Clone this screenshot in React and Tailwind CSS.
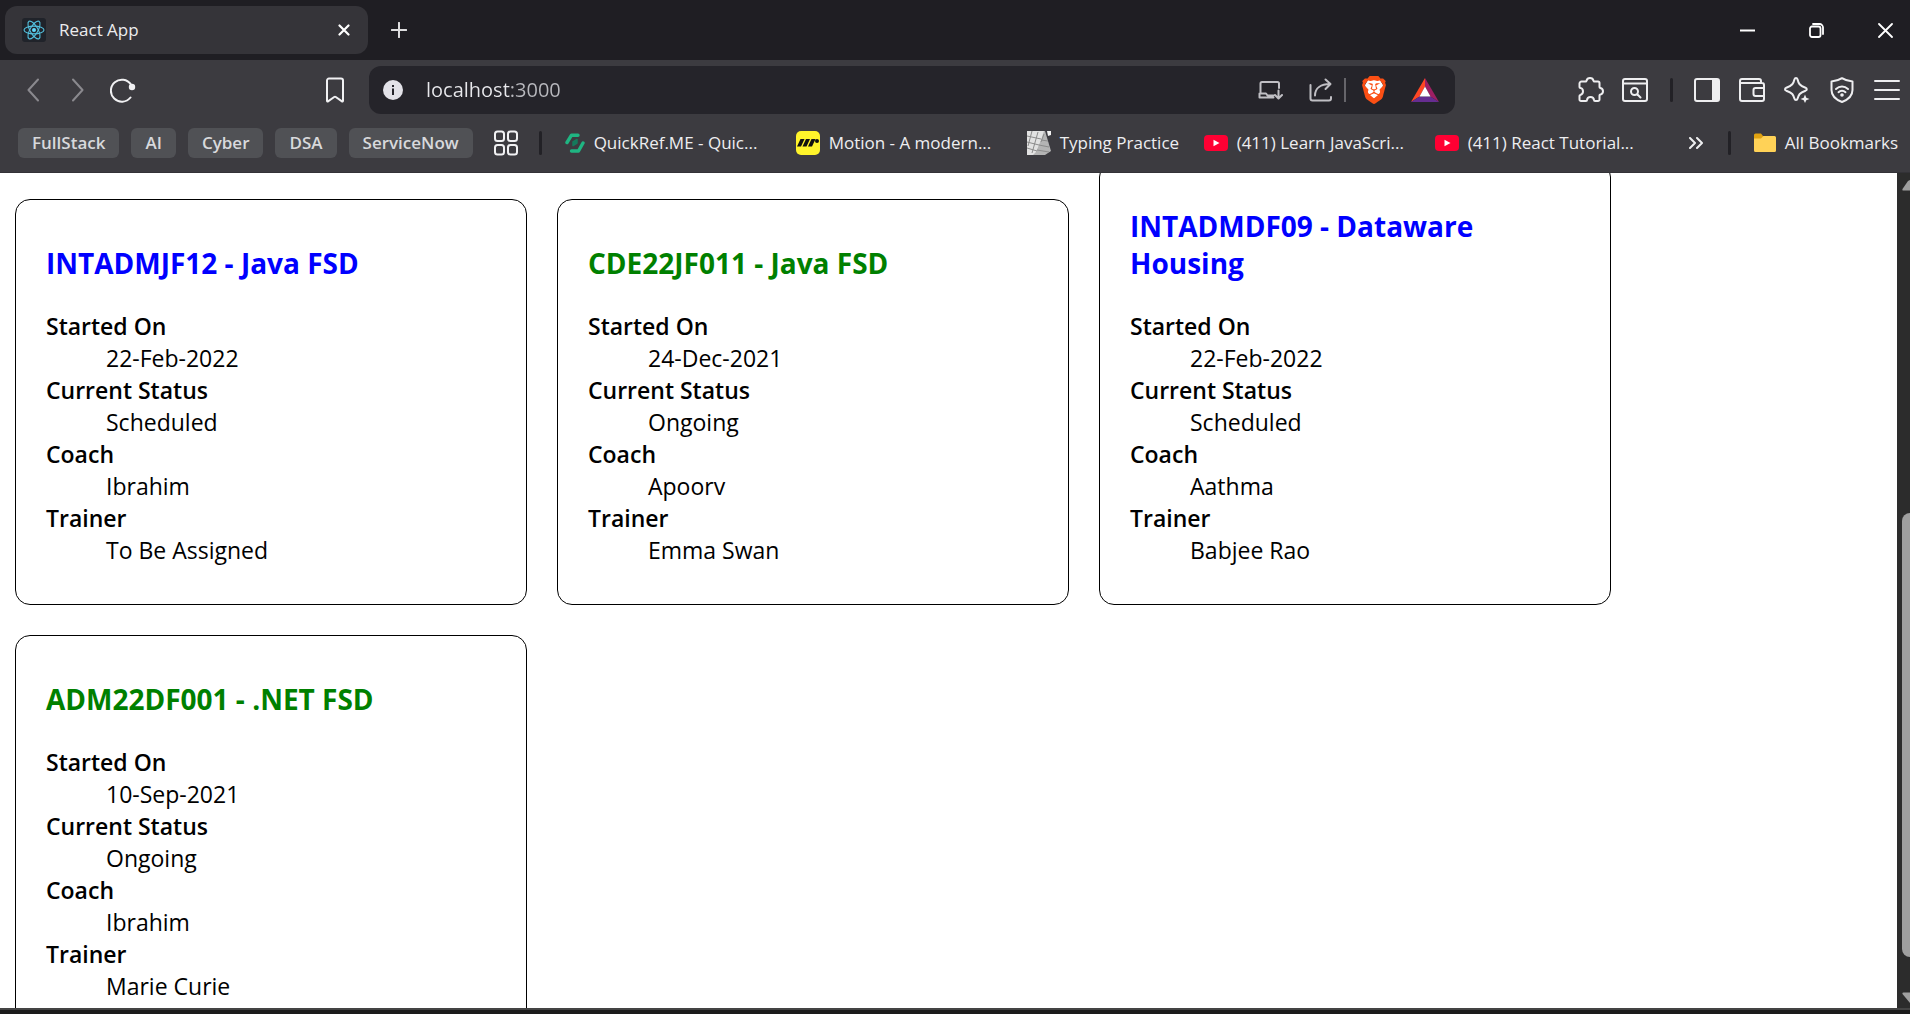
import React from "react";
import { SiBrave } from "react-icons/si";

const TAGS = ["FullStack", "AI", "Cyber", "DSA", "ServiceNow"];

const COHORTS = [
  { code: "INTADMJF12 - Java FSD", started: "22-Feb-2022", status: "Scheduled", coach: "Ibrahim", trainer: "To Be Assigned" },
  { code: "CDE22JF011 - Java FSD", started: "24-Dec-2021", status: "Ongoing", coach: "Apoorv", trainer: "Emma Swan" },
  { code: "INTADMDF09 - Dataware Housing", started: "22-Feb-2022", status: "Scheduled", coach: "Aathma", trainer: "Babjee Rao" },
  { code: "ADM22DF001 - .NET FSD", started: "10-Sep-2021", status: "Ongoing", coach: "Ibrahim", trainer: "Marie Curie" },
];

function Icon({ w = 26, h = 26, children, sw = 2, className = "" }) {
  return (
    <svg
      width={w}
      height={h}
      viewBox={`0 0 ${w} ${h}`}
      fill="none"
      stroke="currentColor"
      strokeWidth={sw}
      strokeLinecap="round"
      strokeLinejoin="round"
      className={`shrink-0 ${className}`}
      aria-hidden="true"
    >
      {children}
    </svg>
  );
}

function IconButton({ label, children, className = "" }) {
  return (
    <button type="button" aria-label={label} className={`flex shrink-0 items-center justify-center ${className}`}>
      {children}
    </button>
  );
}

function ReactLogo() {
  return (
    <svg width="24" height="24" viewBox="0 0 24 24" fill="none" stroke="#53c1de" strokeWidth="1.1" className="shrink-0" aria-hidden="true">
      <rect width="24" height="24" rx="3" fill="#20232a" stroke="none" />
      <circle cx="12" cy="12" r="2" fill="#61dafb" stroke="none" />
      <ellipse cx="12" cy="12" rx="10" ry="3.9" />
      <ellipse cx="12" cy="12" rx="10" ry="3.9" transform="rotate(60 12 12)" />
      <ellipse cx="12" cy="12" rx="10" ry="3.9" transform="rotate(120 12 12)" />
    </svg>
  );
}

function TabStrip() {
  return (
    <header className="flex h-[60px] shrink-0 items-center justify-between bg-[#1f1e23] pr-[17px] pl-[5px]">
      <div className="flex items-center gap-[23px]">
        <div className="flex h-12 w-[363px] items-center rounded-xl bg-[#353439] pr-[18px] pl-[17px]">
          <ReactLogo />
          <span className="ml-[13px] flex-1 text-[17px] text-[#ececee]">React App</span>
          <IconButton label="Close tab">
            <Icon w={12} h={12} sw={2.2} className="text-white">
              <path d="M1.5 1.5l9 9M10.5 1.5l-9 9" />
            </Icon>
          </IconButton>
        </div>
        <IconButton label="New tab">
          <Icon w={16} h={16} className="text-[#dededf]">
            <path d="M8 .8v14.4M.8 8h14.4" />
          </Icon>
        </IconButton>
      </div>
      <div className="flex items-center gap-[54px] text-white">
        <IconButton label="Minimize">
          <Icon w={15} h={15}>
            <path d="M1 7.5h13" strokeLinecap="square" />
          </Icon>
        </IconButton>
        <IconButton label="Restore">
          <Icon w={15} h={15} sw={1.8}>
            <rect x="1" y="3.5" width="10.5" height="10.5" rx="2" />
            <path d="M4 1h6.500A3.500 3.500 0 0 1 14 4.500V11" />
          </Icon>
        </IconButton>
        <IconButton label="Close window">
          <Icon w={15} h={15} sw={1.8}>
            <path d="M1 1l13 13M14 1L1 14" />
          </Icon>
        </IconButton>
      </div>
    </header>
  );
}

function AddressBar() {
  return (
    <div className="flex h-12 flex-1 items-center rounded-xl bg-[#25242a] pr-4 pl-[14px]">
      <IconButton label="View site information">
        <svg width="20" height="20" viewBox="0 0 20 20" className="shrink-0" aria-hidden="true">
          <circle cx="10" cy="10" r="10" fill="#e3e2e8" />
          <rect x="9" y="5" width="2" height="2" fill="#25242a" />
          <rect x="9" y="8.5" width="2" height="6.5" fill="#25242a" />
        </svg>
      </IconButton>
      <input
        type="text"
        aria-label="Address"
        defaultValue="localhost:3000"
        className="ml-[23px] min-w-0 flex-1 bg-[linear-gradient(to_right,#e8e8ec_85px,#b9b9be_85px)] bg-clip-text text-[20px] text-transparent outline-none"
      />
      <IconButton label="Install app" className="text-[#c0bfc4]">
        <Icon w={25} h={20}>
          <path d="M2.500 13V3.500A1.500 1.500 0 0 1 4 2h15.500A1.500 1.500 0 0 1 21 3.500V8M1.500 13.500H8l1.500 2h6M1.500 13.500v4h14M20.500 10.500v7.500M17 15l3.500 3.500L24 15" />
        </Icon>
      </IconButton>
      <IconButton label="Share" className="ml-[26px] text-[#c0bfc4]">
        <Icon w={24} h={24}>
          <path d="M1.500 7v13.500A2 2 0 0 0 3.500 22.500h16.500A2 2 0 0 0 22 20.500V19M6 17.500C6 10 12 6 21 6M16.500 1.500L21.500 6l-5 5" />
        </Icon>
      </IconButton>
      <span className="ml-[11px] h-6 w-0.5 bg-[#66656a]" />
      <IconButton label="Brave Shields" className="ml-[14px]">
        <span className="grid h-7 w-7 place-items-center">
          <svg width="18" height="22" viewBox="0 0 18 22" className="col-start-1 row-start-1" aria-hidden="true">
            <path d="M3 1h12l3 5-2 10-7 5-7-5L0 6z" fill="#fff" />
          </svg>
          <SiBrave className="z-10 col-start-1 row-start-1 h-7 w-7 text-[#fb4f14]" />
        </span>
      </IconButton>
      <IconButton label="Brave Rewards" className="ml-[23px]">
        <svg width="28" height="24" viewBox="0 0 28 24" className="shrink-0" aria-hidden="true">
          <path d="M14 0v8.500L8.500 18.500 0 24z" fill="#ff4724" />
          <path d="M14 0l14 24-8.500-5.500L14 8.500z" fill="#9e1f63" />
          <path d="M0 24l8.500-5.500h11L28 24z" fill="#662d91" />
          <path d="M14 8.500l5.500 10h-11z" fill="#fff" />
        </svg>
      </IconButton>
    </div>
  );
}

function Toolbar() {
  return (
    <nav aria-label="Browser toolbar" className="flex h-[60px] shrink-0 items-center bg-[#3c3b40]">
      <div className="flex w-[369px] items-center pr-[25px] pl-[27px]">
        <IconButton label="Back" className="text-[#8a898e]">
          <Icon w={12} h={24}>
            <path d="M11 1.500L1.500 12 11 22.500" />
          </Icon>
        </IconButton>
        <IconButton label="Forward" className="ml-[33px] text-[#8a898e]">
          <Icon w={12} h={24}>
            <path d="M1 1.500L10.500 12 1 22.500" />
          </Icon>
        </IconButton>
        <IconButton label="Reload" className="ml-[26px] text-[#f1f1f3]">
          <Icon w={26} h={26}>
            <path d="M21 7.500A11 11 0 1 0 20.500 20.500" />
            <circle cx="22" cy="10" r="3.200" fill="currentColor" stroke="none" />
          </Icon>
        </IconButton>
        <IconButton label="Bookmark this page" className="ml-auto text-[#f1f1f3]">
          <Icon w={18} h={26}>
            <path d="M3 1.500h12A2 2 0 0 1 17 3.500V24a.6.6 0 0 1-1 .4L9.800 20a1.400 1.400 0 0 0-1.600 0L2 24.400a.6.6 0 0 1-1-.4V3.500A2 2 0 0 1 3 1.500z" />
          </Icon>
        </IconButton>
      </div>
      <AddressBar />
      <div className="flex w-[455px] items-center justify-end pr-[10px] text-[#eeeef0]">
        <IconButton label="Extensions">
          <Icon>
            <path d="M4 4.500h3.500a1 1 0 0 0 1-.8C8.900 2 10.200 1 12 1s3.100 1 3.500 2.700a1 1 0 0 0 1 .8H20A1.500 1.500 0 0 1 21.500 6v4a1 1 0 0 0 .8 1c1.700.4 2.700 1.600 2.700 3.300s-1 2.900-2.700 3.300a1 1 0 0 0-.8 1v4a1.500 1.500 0 0 1-1.500 1.500h-3a1 1 0 0 1-1-1c-.2-1.800-1.500-3-3.500-3s-3.300 1.200-3.500 3a1 1 0 0 1-1 1H3A1.500 1.500 0 0 1 1.500 22.600V19a1 1 0 0 1 .8-1C4 17.600 5 16 5 14.300s-1-3-2.700-3.400a1 1 0 0 1-.8-1V6.500a2 2 0 0 1 2-2z" />
          </Icon>
        </IconButton>
        <IconButton label="Search this page" className="ml-[18px]">
          <Icon>
            <rect x="1" y="2" width="24" height="22" rx="2" />
            <path d="M1.500 6.500h23" />
            <circle cx="12.500" cy="14.500" r="3.500" />
            <path d="M15.500 17.500l3 3" />
          </Icon>
        </IconButton>
        <span className="ml-[22px] h-6 w-[3px] rounded bg-[#222126]" />
        <IconButton label="Sidebar" className="ml-[21px]">
          <Icon>
            <rect x="1" y="2" width="24" height="22" rx="2" />
            <path d="M18 2h6a1 1 0 0 1 1 1v20a1 1 0 0 1-1 1h-6z" fill="currentColor" stroke="none" />
          </Icon>
        </IconButton>
        <IconButton label="Wallet" className="ml-[19px]">
          <Icon>
            <path d="M22 6V4a2 2 0 0 0-2-2H3a2 2 0 0 0-2 2v18a2 2 0 0 0 2 2h20a2 2 0 0 0 2-2V8a2 2 0 0 0-2-2H1.500M25 11h-8.500a2 2 0 0 0-2 2v4a2 2 0 0 0 2 2H25" />
          </Icon>
        </IconButton>
        <IconButton label="Leo AI" className="ml-[19px]">
          <Icon>
            <path d="M12 1c.8 0 1.300.6 1.500 1.300C14.500 6.500 15.500 8.500 21.500 10.700c1.700.7 1.700 2.300 0 3C15.500 16 14.700 17.500 13.500 21.800c-.4 1.600-2.600 1.600-3 0C9.300 17.500 8.500 16 2.300 13.700c-1.700-.7-1.700-2.300 0-3C8.300 8.500 9.500 6.500 10.500 2.300 10.700 1.600 11.200 1 12 1z" />
            <path d="M21 17.500l1.300 3.200 3.200 1.300-3.200 1.300L21 26l-1.300-2.700L16.500 22l3.200-1.300z" fill="currentColor" stroke="none" />
          </Icon>
        </IconButton>
        <IconButton label="VPN" className="ml-5">
          <Icon w={24} h={26}>
            <path d="M12 1.200c3 2 6.500 3 10.500 3.300V13c0 5.500-4 9.500-10.500 12C5.500 22.500 1.500 18.500 1.500 13V4.500C5.500 4.200 9 3.200 12 1.200z" />
            <path d="M6 12c3.500-3.200 8.500-3.200 12 0M8.500 15.200c2-1.800 5-1.800 7 0" />
            <circle cx="12" cy="18" r="1.800" fill="currentColor" stroke="none" />
          </Icon>
        </IconButton>
        <IconButton label="Menu" className="ml-5">
          <Icon>
            <path d="M1 4h24M1 13h24M1 22h24" />
          </Icon>
        </IconButton>
      </div>
    </nav>
  );
}

function YouTubeIcon() {
  return (
    <svg width="24" height="24" viewBox="0 0 24 24" className="shrink-0" aria-hidden="true">
      <rect y="4" width="24" height="16" rx="4" fill="#ff0033" />
      <path d="M9.500 8.700v6.600l6-3.300z" fill="#fff" />
    </svg>
  );
}

function QuickRefIcon() {
  return (
    <svg width="20" height="24" viewBox="0 0 20 24" className="shrink-0" aria-hidden="true" strokeLinecap="round" strokeLinejoin="round" fill="none">
      <path d="M13 4.200H6.500L2 11.500" stroke="#1fb582" strokeWidth="3.400" />
      <path d="M6.500 20H13.500L18 12" stroke="#1fb582" strokeWidth="3.400" />
      <path d="M8 14.500V11l4-2.500V12z" fill="#157a5c" stroke="#157a5c" strokeWidth="1.500" />
    </svg>
  );
}

function MotionIcon() {
  return (
    <svg width="24" height="24" viewBox="0 0 24 24" className="shrink-0" aria-hidden="true">
      <rect width="24" height="24" rx="5" fill="#fff42b" />
      <path d="M4.500 8h4L5 15.500H1zM10 8h4l-3.500 7.500h-4zM15.500 8h4L16 15.500h-4z" fill="#111" />
      <circle cx="21" cy="10" r="2" fill="#111" />
    </svg>
  );
}

function TypingIcon() {
  return (
    <svg width="24" height="24" viewBox="0 0 24 24" className="shrink-0" aria-hidden="true">
      <path d="M0 0h18l6 20-6 4H0z" fill="#b4b4b4" />
      <path d="M0 0h17l-3 9-5 12-3 3H0z" fill="#e2e2e2" />
      <path d="M0 5l14 3M0 11l12 3M0 17l10 3M5 0L1 15M11 1L5 22M14 9l7 1M12 14l10 2M10 19l12 2M17 3l-3 8" stroke="#8b8b8b" strokeWidth="1" fill="none" />
      <path d="M20 0h4v4l-3 1z" fill="#f2f2f2" />
    </svg>
  );
}

function BookmarkLink({ icon, children, className = "w-[200px]" }) {
  return (
    <a href="#" className={`flex shrink-0 items-center whitespace-nowrap text-[17px] text-[#eeeef0] ${className}`}>
      {icon}
      <span className="ml-[9px]">{children}</span>
    </a>
  );
}

function BookmarksBar() {
  return (
    <nav aria-label="Bookmarks" className="flex h-[53px] shrink-0 items-center border-b border-[#333237] bg-[#3c3b40] pr-3 pb-1.5 pl-[18px]">
      <div className="flex gap-3">
        {TAGS.map((tag) => (
          <button key={tag} type="button" className="h-[30px] rounded-md bg-[#505155] px-[14px] text-[17px] font-semibold text-[#d8d9dc]">
            {tag}
          </button>
        ))}
      </div>
      <IconButton label="All tabs" className="ml-[21px] text-[#f1f1f3]">
        <Icon w={24} h={26}>
          <rect x="1" y="1.5" width="9" height="9.5" rx="2.5" />
          <rect x="14" y="1.5" width="9" height="9.5" rx="2.5" />
          <rect x="1" y="15" width="9" height="9.5" rx="2.5" />
          <rect x="14" y="15" width="9" height="9.5" rx="2.5" />
        </Icon>
      </IconButton>
      <span className="ml-[21px] h-6 w-[3px] rounded bg-[#222126]" />
      <div className="ml-[23px] flex flex-1 items-center gap-[31px]">
        <BookmarkLink icon={<QuickRefIcon />}>QuickRef.ME - Quic...</BookmarkLink>
        <BookmarkLink icon={<MotionIcon />}>Motion - A modern...</BookmarkLink>
        <BookmarkLink icon={<TypingIcon />} className="w-[146px]">Typing Practice</BookmarkLink>
        <BookmarkLink icon={<YouTubeIcon />}>(411) Learn JavaScri...</BookmarkLink>
        <BookmarkLink icon={<YouTubeIcon />}>(411) React Tutorial...</BookmarkLink>
      </div>
      <IconButton label="More bookmarks" className="mr-[25px] text-[#eeeef0]">
        <Icon w={14} h={12}>
          <path d="M1 1l5 5-5 5M8 1l5 5-5 5" />
        </Icon>
      </IconButton>
      <span className="mr-[23px] h-6 w-[3px] rounded bg-[#222126]" />
      <BookmarkLink
        className=""
        icon={
          <svg width="22" height="20" viewBox="0 0 22 20" aria-hidden="true">
            <path d="M0 2a1.500 1.500 0 0 1 1.500-1.500H7L9 3h11v8H0z" fill="#e0a211" />
            <path d="M0 5.500h7L9.500 3H20.500A1.500 1.500 0 0 1 22 4.500v13a1.500 1.500 0 0 1-1.500 1.500h-19A1.500 1.500 0 0 1 0 17.500z" fill="#ffd257" />
          </svg>
        }
      >
        All Bookmarks
      </BookmarkLink>
    </nav>
  );
}

function CohortCard({ cohort }) {
  const color = cohort.status === "Ongoing" ? "text-[#008000]" : "text-[#0000ff]";
  return (
    <article className="w-[512px] rounded-[15px] border border-black px-[30px] pt-[45px] pb-[38px] text-black">
      <h3 className={`text-[28px] leading-[37px] font-bold ${color}`}>{cohort.code}</h3>
      <dl className="mt-7 text-[23px] leading-8">
        <dt className="font-semibold">Started On</dt>
        <dd className="ml-[60px]">{cohort.started}</dd>
        <dt className="font-semibold">Current Status</dt>
        <dd className="ml-[60px]">{cohort.status}</dd>
        <dt className="font-semibold">Coach</dt>
        <dd className="ml-[60px]">{cohort.coach}</dd>
        <dt className="font-semibold">Trainer</dt>
        <dd className="ml-[60px]">{cohort.trainer}</dd>
      </dl>
    </article>
  );
}

function Scrollbar() {
  return (
    <div className="flex w-[13px] shrink-0 flex-col overflow-hidden bg-[#2c2c2c] pt-[7px] pb-[5px] pl-[5px]" aria-hidden="true">
      <svg width="16" height="11" viewBox="0 0 16 11" className="shrink-0">
        <path d="M8 0l7.500 9q.5 1.500-1 1.500h-13q-1.500 0-1-1.500L6 1z" fill="#9f9f9f" />
      </svg>
      <div className="flex w-4 flex-1 flex-col">
        <div className="flex-[322]" />
        <div className="flex-[444] rounded-lg bg-[#9f9f9f]" />
        <div className="flex-[35]" />
      </div>
      <svg width="16" height="11" viewBox="0 0 16 11" className="shrink-0">
        <path d="M8 11L.5 2Q0 .5 1.500.5h13q1.500 0 1 1.500L10 10z" fill="#9f9f9f" />
      </svg>
    </div>
  );
}

export default function App() {
  return (
    <div className="flex h-screen flex-col overflow-hidden bg-white font-['Segoe_UI','Open_Sans',sans-serif]">
      <TabStrip />
      <Toolbar />
      <BookmarksBar />
      <div className="flex min-h-0 flex-1">
        <main className="min-w-0 flex-1 overflow-hidden px-[15px]">
          <div className="-mt-[11px] flex flex-wrap items-end gap-[30px]">
            {COHORTS.map((cohort) => (
              <CohortCard key={cohort.code} cohort={cohort} />
            ))}
          </div>
        </main>
        <Scrollbar />
      </div>
      <div className="h-[6px] shrink-0 border-t-2 border-[#444444] bg-[#1b1b1b]" />
    </div>
  );
}
